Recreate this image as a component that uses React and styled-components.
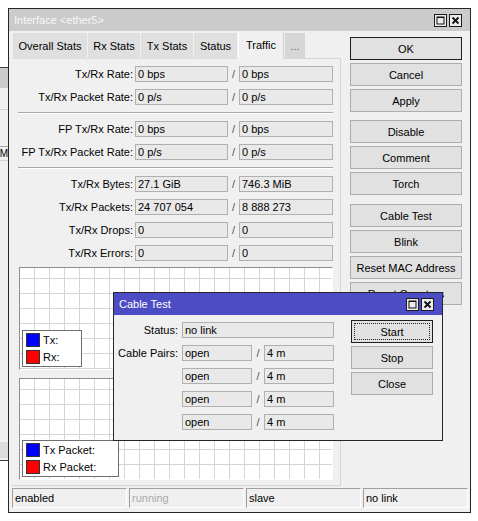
import React from "react";
import styled, { createGlobalStyle, css } from "styled-components";

const GlobalStyle = createGlobalStyle`
  html, body {
    margin: 0;
    padding: 0;
    background: #fff;
  }
  body {
    font-family: "Liberation Sans", Arial, sans-serif;
    font-size: 11px;
    color: #000;
  }
`;

const Desktop = styled.div`
  position: relative;
  width: 478px;
  height: 521px;
  overflow: hidden;
  background: #fff;
`;

/* window partly hidden behind the main one */
const BackWindow = styled.div`
  position: absolute;
  left: -100px;
  top: 67px;
  width: 109px;
  height: 394px;
  box-sizing: border-box;
  border: 1px solid #3a3a3a;
  background: #f0f0f0;
  display: flex;
  flex-direction: column;
`;

const BackTitle = styled.div`
  height: 20px;
  background: #cbcbcb;
`;

const BackToolbar = styled.div`
  height: 21px;
  border-bottom: 1px solid #d2d2d2;
`;

const BackHeader = styled.div`
  margin-top: 36px;
  height: 13px;
  border-top: 1px solid #a8a8a8;
  border-bottom: 1px solid #d0d0d0;
  display: flex;
  justify-content: flex-end;
  align-items: center;
  font-size: 10px;
`;

const BackFooter = styled.div`
  margin-top: auto;
  margin-bottom: 2px;
  height: 16px;
  background: #dcdcdc;
`;

const Window = styled.div`
  position: absolute;
  left: ${(p) => p.$x}px;
  top: ${(p) => p.$y}px;
  width: ${(p) => p.$w}px;
  height: ${(p) => p.$h}px;
  box-sizing: border-box;
  border: 1px solid #262626;
  background: #f0f0f0;
  display: flex;
  flex-direction: column;
`;

const TitleBar = styled.div`
  height: 22px;
  flex: none;
  display: flex;
  align-items: center;
  justify-content: space-between;
  padding: 0 8px 0 5px;
  background: ${(p) => (p.$active ? "#4c4cc4" : "#cbcbcb")};
  color: ${(p) => (p.$active ? "#fff" : "#f7f7f7")};
  font-size: 11px;
`;

const TitleButtons = styled.div`
  display: flex;
  gap: 2px;
`;

const TitleBtn = styled.span`
  width: 13px;
  height: 13px;
  box-sizing: border-box;
  border: 1px solid #1c1c1c;
  background: #ececec;
  display: flex;
  align-items: center;
  justify-content: center;
`;

const MainBody = styled.div`
  flex: 1;
  min-height: 0;
  display: flex;
  padding: 0 8px 0 3px;
`;

const LeftCol = styled.div`
  width: 329px;
  display: flex;
  flex-direction: column;
`;

const Tabs = styled.div`
  height: 27px;
  margin: 1px 0 -1px 1px;
  display: flex;
  align-items: flex-end;
  gap: 1px;
  position: relative;
  z-index: 1;
`;

const Tab = styled.div`
  width: ${(p) => p.$w}px;
  height: ${(p) => (p.$active ? 27 : 26)}px;
  box-sizing: border-box;
  display: flex;
  align-items: center;
  justify-content: center;
  padding-bottom: 1px;
  white-space: nowrap;
  font-size: 11px;
  background: ${(p) => (p.$active ? "#f0f0f0" : p.$more ? "#d6d6d6" : "#dfdfdf")};
  color: ${(p) => (p.$more ? "#666" : "#000")};
  ${(p) =>
    p.$active &&
    css`
      border-left: 1px solid #fff;
      border-right: 1px solid #cfcfcf;
    `}
`;

const Panel = styled.div`
  flex: 1;
  min-height: 0;
  display: flex;
  flex-direction: column;
  padding: 3px 7px 5px 6px;
  border-top: 1px solid #d6d6d6;
  border-right: 1px solid #d6d6d6;
  border-bottom: 1px solid #d6d6d6;
`;

const FormRow = styled.div`
  display: grid;
  grid-template-columns: ${(p) => p.$cols};
  height: 23px;
  align-items: center;
`;

const Label = styled.div`
  text-align: right;
  padding-right: ${(p) => p.$pad || 2}px;
  white-space: nowrap;
`;

const Field = styled.div`
  height: 16px;
  box-sizing: border-box;
  border: 1px solid #b0b0b0;
  background: #e9e9e9;
  padding-left: 2px;
  line-height: 14px;
  white-space: nowrap;
  overflow: hidden;
  ${(p) =>
    p.$span &&
    css`
      grid-column: ${p.$span};
    `}
`;

const Slash = styled.div`
  text-align: center;
  color: #555;
`;

const Separator = styled.div`
  margin: 4px 0 3px;
  border-top: 1px solid #a8a8a8;
  border-bottom: 1px solid #fff;
`;

const Graphs = styled.div`
  flex: 1;
  display: flex;
  flex-direction: column;
  gap: 8px;
  margin: 3px 0 0 1px;
`;

const Graph = styled.div`
  position: relative;
  flex: 1;
  background-color: #fff;
  border: 1px solid;
  border-color: #8f8f8f #fff #fff #8f8f8f;
  background-image: linear-gradient(to right, transparent 14px, #d4d4d4 14px),
    linear-gradient(to bottom, transparent 14px, #d4d4d4 14px);
  background-size: 15px 15px;
  background-position: 0 -4px;
`;

const Legend = styled.div`
  position: absolute;
  left: 2px;
  bottom: 2px;
  width: ${(p) => p.$w}px;
  box-sizing: border-box;
  background: #fff;
  border: 1px solid #6e6e6e;
  padding: 2px 3px;
  display: flex;
  flex-direction: column;
  gap: 3px;
`;

const LegendRow = styled.div`
  display: flex;
  align-items: center;
  gap: 3px;
  height: 14px;
  font-size: 11px;
`;

const Swatch = styled.span`
  width: 14px;
  height: 14px;
  box-sizing: border-box;
  border: 1px solid #333;
  background: ${(p) => p.$color};
`;

const ButtonCol = styled.div`
  width: ${(p) => p.$w}px;
  margin-left: ${(p) => p.$ml}px;
  padding-top: ${(p) => p.$pt}px;
  display: flex;
  flex-direction: column;
  gap: 3px;
`;

const Button = styled.div`
  height: 23px;
  flex: none;
  box-sizing: border-box;
  position: relative;
  display: flex;
  align-items: center;
  justify-content: center;
  white-space: nowrap;
  overflow: hidden;
  font-size: 11px;
  background: #e1e1e1;
  border: 1px solid ${(p) => (p.$default ? "#1e1e1e" : "#adadad")};
  margin-top: ${(p) => p.$mt || 0}px;
  ${(p) =>
    p.$focus &&
    css`
      &::after {
        content: "";
        position: absolute;
        inset: 2px;
        border: 1px dotted #222;
      }
    `}
`;

const StatusBar = styled.div`
  height: 26px;
  flex: none;
  box-sizing: border-box;
  display: grid;
  grid-template-columns: 115px 115px 115px 1fr;
  gap: 2px;
  padding: 2px 2px 4px 3px;
`;

const StatusCell = styled.div`
  border: 1px solid;
  border-color: #a0a0a0 #fff #fff #a0a0a0;
  padding-left: 2px;
  line-height: 18px;
  font-size: 11px;
  color: ${(p) => (p.$muted ? "#ababab" : "#000")};
`;

const DialogBody = styled.div`
  flex: 1;
  display: flex;
`;

const DialogForm = styled.div`
  padding-top: 3px;
`;

const MaxIcon = () => (
  <svg width="9" height="9" viewBox="0 0 9 9">
    <rect x="1" y="1" width="7" height="7" fill="none" stroke="#111" strokeWidth="1" />
    <line x1="1" y1="1.5" x2="8" y2="1.5" stroke="#111" strokeWidth="1" />
  </svg>
);

const CloseIcon = () => (
  <svg width="9" height="9" viewBox="0 0 9 9">
    <path d="M1.5 1.5 L7.5 7.5 M7.5 1.5 L1.5 7.5" stroke="#111" strokeWidth="1.8" />
  </svg>
);

const TitleControls = () => (
  <TitleButtons>
    <TitleBtn>
      <MaxIcon />
    </TitleBtn>
    <TitleBtn>
      <CloseIcon />
    </TitleBtn>
  </TitleButtons>
);

const statGroups = [
  [
    ["Tx/Rx Rate:", "0 bps", "0 bps"],
    ["Tx/Rx Packet Rate:", "0 p/s", "0 p/s"],
  ],
  [
    ["FP Tx/Rx Rate:", "0 bps", "0 bps"],
    ["FP Tx/Rx Packet Rate:", "0 p/s", "0 p/s"],
  ],
  [
    ["Tx/Rx Bytes:", "27.1 GiB", "746.3 MiB"],
    ["Tx/Rx Packets:", "24 707 054", "8 888 273"],
    ["Tx/Rx Drops:", "0", "0"],
    ["Tx/Rx Errors:", "0", "0"],
  ],
];

const tabs = [
  { name: "Overall Stats", w: 74 },
  { name: "Rx Stats", w: 52 },
  { name: "Tx Stats", w: 52 },
  { name: "Status", w: 43 },
  { name: "Traffic", w: 46, active: true },
  { name: "...", w: 20, more: true },
];

const sideButtons = [
  { label: "OK", def: true },
  { label: "Cancel" },
  { label: "Apply" },
  { label: "Disable", mt: 5 },
  { label: "Comment" },
  { label: "Torch" },
  { label: "Cable Test", mt: 6 },
  { label: "Blink" },
  { label: "Reset MAC Address" },
  { label: "Reset Counters" },
];

const STAT_COLS = "117px 93px 11px 94px";
const CABLE_COLS = "68px 70px 12px 70px";

export default function App() {
  return (
    <>
      <GlobalStyle />
      <Desktop>
        <BackWindow>
          <BackTitle />
          <BackToolbar />
          <BackHeader>M</BackHeader>
          <BackFooter />
        </BackWindow>

        <Window $x={8} $y={8} $w={463} $h={505}>
          <TitleBar>
            <span>{"Interface <ether5>"}</span>
            <TitleControls />
          </TitleBar>
          <MainBody>
            <LeftCol>
              <Tabs>
                {tabs.map((t) => (
                  <Tab key={t.name} $w={t.w} $active={t.active} $more={t.more}>
                    {t.name}
                  </Tab>
                ))}
              </Tabs>
              <Panel>
                {statGroups.map((group, gi) => (
                  <React.Fragment key={gi}>
                    {gi > 0 && <Separator />}
                    {group.map(([label, a, b]) => (
                      <FormRow key={label} $cols={STAT_COLS}>
                        <Label>{label}</Label>
                        <Field>{a}</Field>
                        <Slash>/</Slash>
                        <Field>{b}</Field>
                      </FormRow>
                    ))}
                  </React.Fragment>
                ))}
                <Graphs>
                  <Graph>
                    <Legend $w={60}>
                      <LegendRow>
                        <Swatch $color="#0000ff" />
                        Tx:
                      </LegendRow>
                      <LegendRow>
                        <Swatch $color="#ff0000" />
                        Rx:
                      </LegendRow>
                    </Legend>
                  </Graph>
                  <Graph>
                    <Legend $w={97}>
                      <LegendRow>
                        <Swatch $color="#0000ff" />
                        Tx Packet:
                      </LegendRow>
                      <LegendRow>
                        <Swatch $color="#ff0000" />
                        Rx Packet:
                      </LegendRow>
                    </Legend>
                  </Graph>
                </Graphs>
              </Panel>
            </LeftCol>
            <ButtonCol $w={112} $ml={9} $pt={6}>
              {sideButtons.map((b) => (
                <Button key={b.label} $default={b.def} $mt={b.mt}>
                  {b.label}
                </Button>
              ))}
            </ButtonCol>
          </MainBody>
          <StatusBar>
            <StatusCell>enabled</StatusCell>
            <StatusCell $muted>running</StatusCell>
            <StatusCell>slave</StatusCell>
            <StatusCell>no link</StatusCell>
          </StatusBar>
        </Window>

        <Window $x={113} $y={292} $w={330} $h={149}>
          <TitleBar $active>
            <span>Cable Test</span>
            <TitleControls />
          </TitleBar>
          <DialogBody>
            <DialogForm>
              <FormRow $cols={CABLE_COLS}>
                <Label $pad={4}>Status:</Label>
                <Field $span="2 / 5">no link</Field>
              </FormRow>
              {[0, 1, 2, 3].map((i) => (
                <FormRow key={i} $cols={CABLE_COLS}>
                  <Label $pad={4}>{i === 0 ? "Cable Pairs:" : ""}</Label>
                  <Field>open</Field>
                  <Slash>/</Slash>
                  <Field>4 m</Field>
                </FormRow>
              ))}
            </DialogForm>
            <ButtonCol $w={82} $ml={17} $pt={5}>
              <Button $default $focus>
                Start
              </Button>
              <Button>Stop</Button>
              <Button>Close</Button>
            </ButtonCol>
          </DialogBody>
        </Window>
      </Desktop>
    </>
  );
}
